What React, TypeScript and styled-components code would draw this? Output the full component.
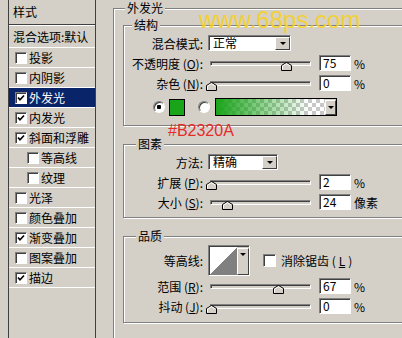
import { createGlobalStyle, styled } from 'styled-components'

const GlobalStyle = createGlobalStyle`
	html, body {
		margin: 0;
		padding: 0;
		background: #d4d0c8;
	}
	body {
		font-family: "Noto Sans CJK SC", "Liberation Sans", sans-serif;
		font-size: 12px;
		color: #000;
	}
`

const Window = styled.div`
	position: relative;
	width: 402px;
	height: 338px;
	overflow: hidden;
	display: flex;
	align-items: flex-start;
	background: #d4d0c8;
`

// left list of layer styles
const StyleList = styled.div`
	flex: none;
	width: 86px;
	height: 360px;
	margin-left: 8px;
	border-left: 1px solid #404040;
	border-right: 1px solid #404040;
`
const ListHeader = styled.div`
	height: 24px;
	line-height: 24px;
	padding-left: 4px;
	border-bottom: 1px solid #404040;
`
const BlendRow = styled.div`
	height: 21px;
	line-height: 21px;
	padding-left: 4px;
	white-space: nowrap;
	overflow: hidden;
	border-top: 1px solid #fff;
	border-bottom: 1px solid #fff;
`
const StyleRow = styled.div<{ $active?: boolean; $sub?: boolean }>`
	display: flex;
	align-items: center;
	height: 19px;
	padding-left: ${p => (p.$sub ? 18 : 6)}px;
	border-bottom: 1px solid #fff;
	background: ${p => (p.$active ? '#0a246a' : 'transparent')};
	color: ${p => (p.$active ? '#fff' : '#000')};
	white-space: nowrap;
`
const CheckBox = styled.span<{ $size?: number }>`
	flex: none;
	box-sizing: border-box;
	width: ${p => p.$size ?? 12}px;
	height: ${p => p.$size ?? 12}px;
	margin-right: 2px;
	background: #fff;
	border: 1px solid;
	border-color: #808080 #fff #fff #808080;
	box-shadow: inset 1px 1px 0 #404040;
	display: flex;
	align-items: center;
	justify-content: center;
`

// right side: effect settings
const Effect = styled.div`
	flex: none;
	width: 330px;
	margin-left: 17px;
`
const Group = styled.fieldset<{ $pb: number }>`
	margin: 0;
	min-width: 0;
	padding: 0 0 ${p => p.$pb}px 7px;
	border: 1px solid #808080;
	box-shadow: inset 1px 1px 0 #fff, 1px 1px 0 #fff;
	& + & {
		margin-top: 10px;
	}
`
const OuterGroup = styled(Group)`
	padding: 1px 0 0 9px;
	height: 360px;
`
const Legend = styled.legend<{ $indent: number }>`
	margin-left: ${p => p.$indent}px;
	padding: 0 2px;
	line-height: 16px;
	background: #d4d0c8;
`
const Row = styled.div<{ $h?: number }>`
	display: flex;
	align-items: center;
	height: ${p => p.$h ?? 20}px;
	white-space: nowrap;
`
const Label = styled.span`
	flex: none;
	width: 72px;
	margin-right: 5px;
	text-align: right;
`
const Select = styled.div<{ $w: number }>`
	box-sizing: border-box;
	display: flex;
	width: ${p => p.$w}px;
	height: 16px;
	background: #fff;
	border: 1px solid;
	border-color: #808080 #fff #fff #808080;
	box-shadow: inset 1px 1px 0 #404040;
	line-height: 14px;
`
const SelectText = styled.span`
	flex: 1;
	padding-left: 4px;
`
const DropButton = styled.span<{ $w?: number; $top?: boolean }>`
	flex: none;
	box-sizing: border-box;
	width: ${p => p.$w ?? 15}px;
	margin: 1px 0 0 0;
	background: #d4d0c8;
	border: 1px solid;
	border-color: #fff #404040 #404040 #fff;
	display: flex;
	justify-content: center;
	align-items: ${p => (p.$top ? 'flex-start' : 'center')};
	padding-top: ${p => (p.$top ? 4 : 0)}px;
	&::after {
		content: '';
		border-left: 3px solid transparent;
		border-right: 3px solid transparent;
		border-top: 3px solid #000;
	}
`
const Slider = styled.div`
	position: relative;
	flex: none;
	width: 104px;
	height: 20px;
`
const Track = styled.div`
	box-sizing: border-box;
	height: 5px;
	margin: 8px 1px 0 2px;
	background: #d4d0c8;
	border: 1px solid;
	border-color: #808080 #fff #fff #808080;
	box-shadow: inset 1px 1px 0 #404040;
`
const Thumb = styled.svg`
	position: absolute;
	top: 9px;
`
const NumberBox = styled.div`
	box-sizing: border-box;
	flex: none;
	width: 32px;
	height: 16px;
	margin-left: 7px;
	padding-left: 3px;
	line-height: 14px;
	background: #fff;
	border: 1px solid;
	border-color: #808080 #fff #fff #808080;
	box-shadow: inset 1px 1px 0 #404040;
`
const Unit = styled.span`
	margin-left: 3px;
`
const ColorRow = styled(Row)`
	margin-top: 4px;
	padding-left: 22px;
`
const Radio = styled.span<{ $checked?: boolean }>`
	flex: none;
	box-sizing: border-box;
	width: 12px;
	height: 12px;
	border-radius: 50%;
	border: 1px solid;
	border-color: #808080 #fff #fff #808080;
	box-shadow: inset 1px 1px 0 #404040;
	background: ${p => (p.$checked ? 'radial-gradient(circle, #000 0 2px, #fff 2.5px)' : '#fff')};
`
const Swatch = styled.span`
	flex: none;
	box-sizing: border-box;
	width: 16px;
	height: 17px;
	margin: 0 13px 0 4px;
	border: 1px solid #000;
	background: #1aa41a;
`
const GradientBox = styled.div`
	flex: none;
	box-sizing: border-box;
	display: flex;
	width: 122px;
	height: 18px;
	margin-left: 5px;
	border: 1px solid #000;
`
const GradientFill = styled.span`
	flex: 1;
	background:
		linear-gradient(to right, #1aa41a 0%, rgba(26, 164, 26, 0.35) 55%, rgba(26, 164, 26, 0) 85%),
		repeating-conic-gradient(#c8c8c8 0 25%, #fff 0 50%) 0 0 / 8px 8px;
`
const ContourBox = styled.div`
	box-sizing: border-box;
	display: flex;
	width: 42px;
	height: 31px;
	border: 1px solid;
	border-color: #808080 #fff #fff #808080;
	box-shadow: inset 1px 1px 0 #404040;
	padding: 1px 0 0 1px;
`
const ContourPreview = styled.span`
	flex: 1;
	background: linear-gradient(to bottom right, #fff 50%, #808080 50%);
`
const AntiAlias = styled.label`
	display: flex;
	align-items: center;
	margin-left: 13px;
	gap: 3px;
`

// overlays written on top of the screenshot
const Watermark = styled.div`
	position: absolute;
	left: 199px;
	top: 8px;
	font-family: "Liberation Sans", Arial, sans-serif;
	font-size: 24px;
	line-height: 1;
	color: #f6d026;
	opacity: 0.9;
	pointer-events: none;
`
const ColorNote = styled.div`
	position: absolute;
	left: 168px;
	top: 123px;
	font-family: "Liberation Sans", Arial, sans-serif;
	font-size: 16px;
	line-height: 1;
	color: #e62a2a;
`

const effects = [
	{ name: '投影', checked: false },
	{ name: '内阴影', checked: false },
	{ name: '外发光', checked: true, active: true },
	{ name: '内发光', checked: true },
	{ name: '斜面和浮雕', checked: true },
	{ name: '等高线', checked: false, sub: true },
	{ name: '纹理', checked: false, sub: true },
	{ name: '光泽', checked: false },
	{ name: '颜色叠加', checked: false },
	{ name: '渐变叠加', checked: true },
	{ name: '图案叠加', checked: false },
	{ name: '描边', checked: true },
]

const Check = ({ on, size }: { on: boolean; size?: number }) => (
	<CheckBox $size={size}>
		{on && (
			<svg width="8" height="8" viewBox="0 0 8 8">
				<polyline points="1,3.5 3,5.8 7,1.5" fill="none" stroke="#000" strokeWidth="1.6" />
			</svg>
		)}
	</CheckBox>
)

const SliderField = ({ value }: { value: number }) => (
	<Slider>
		<Track />
		<Thumb width="11" height="9" viewBox="0 0 11 9" style={{ left: 3 + value * 100 - 5.5 }}>
			<polygon points="0.5,8.5 0.5,3.5 5.5,0.5 10.5,3.5 10.5,8.5" fill="#d4d0c8" stroke="#000" />
			<polyline points="1.5,7.5 1.5,4 5.5,1.7 9.3,4" fill="none" stroke="#fff" />
		</Thumb>
	</Slider>
)

type SliderRowProps = {
	label: React.ReactNode;
	value: number;
	amount: string;
	unit: string;
}

const SliderRow = ({ label, value, amount, unit }: SliderRowProps) => (
	<Row>
		<Label>{label}</Label>
		<SliderField value={value} />
		<NumberBox>{amount}</NumberBox>
		<Unit>{unit}</Unit>
	</Row>
)

export default function App() {
	return (
		<Window>
			<GlobalStyle />
			<StyleList>
				<ListHeader>样式</ListHeader>
				<BlendRow>混合选项:默认</BlendRow>
				{effects.map(e => (
					<StyleRow key={e.name} $active={e.active} $sub={e.sub}>
						<Check on={e.checked} />
						{e.name}
					</StyleRow>
				))}
			</StyleList>

			<Effect>
				<OuterGroup $pb={0}>
					<Legend $indent={2}>外发光</Legend>

					<Group $pb={8}>
						<Legend $indent={1}>结构</Legend>
						<Row>
							<Label>混合模式:</Label>
							<Select $w={83}>
								<SelectText>正常</SelectText>
								<DropButton />
							</Select>
						</Row>
						<SliderRow label={<>不透明度 (<u>O</u>):</>} value={0.75} amount="75" unit="%" />
						<SliderRow label={<>杂色 (<u>N</u>):</>} value={0} amount="0" unit="%" />
						<ColorRow>
							<Radio $checked />
							<Swatch />
							<Radio />
							<GradientBox>
								<GradientFill />
								<DropButton $w={11} />
							</GradientBox>
						</ColorRow>
					</Group>

					<Group $pb={5}>
						<Legend $indent={5}>图素</Legend>
						<Row>
							<Label>方法:</Label>
							<Select $w={70}>
								<SelectText>精确</SelectText>
								<DropButton />
							</Select>
						</Row>
						<SliderRow label={<>扩展 (<u>P</u>):</>} value={0} amount="2" unit="%" />
						<SliderRow label={<>大小 (<u>S</u>):</>} value={0.16} amount="24" unit="像素" />
					</Group>

					<Group $pb={6}>
						<Legend $indent={5}>品质</Legend>
						<Row $h={32}>
							<Label>等高线:</Label>
							<ContourBox>
								<ContourPreview />
								<DropButton $w={12} $top />
							</ContourBox>
							<AntiAlias>
								<Check on={false} size={13} />
								消除锯齿 (<u>L</u>)
							</AntiAlias>
						</Row>
						<SliderRow label={<>范围 (<u>R</u>):</>} value={0.67} amount="67" unit="%" />
						<SliderRow label={<>抖动 (<u>J</u>):</>} value={0} amount="0" unit="%" />
					</Group>
				</OuterGroup>
			</Effect>

			<Watermark>www.68ps.com</Watermark>
			<ColorNote>#B2320A</ColorNote>
		</Window>
	)
}
